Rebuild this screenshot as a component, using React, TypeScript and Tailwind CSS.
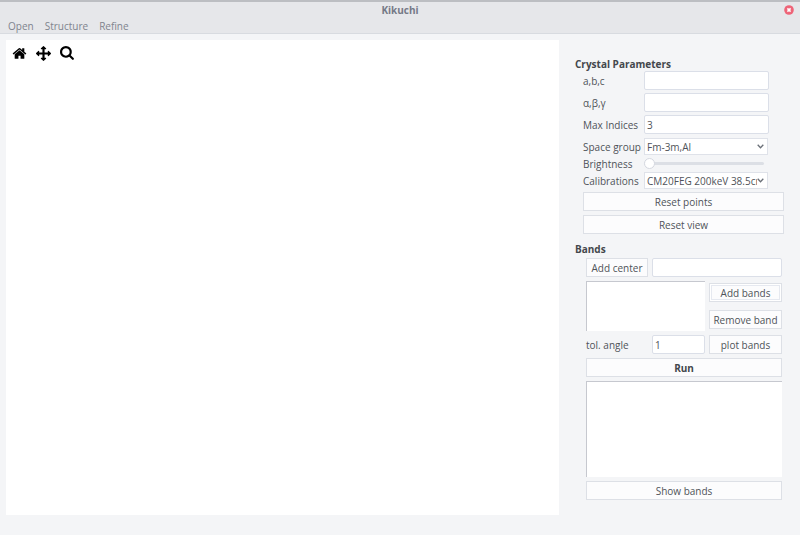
import type { ComponentProps } from 'react'
import { clsx } from 'clsx'

const MENU = ['Open', 'Structure', 'Refine']

const TOOLS = [
  {
    label: 'Home',
    path: 'M1472 992v480q0 26-19 45t-45 19h-384v-384h-256v384h-384q-26 0-45-19t-19-45v-480q0-1 .5-3t.5-3l575-474 575 474q1 2 1 6zm223-69l-62 74q-8 9-21 11h-3q-13 0-21-7l-692-577-692 577q-12 8-24 7-13-2-21-11l-62-74q-8-10-7-23.5t11-21.5l719-599q32-26 76-26t76 26l244 204v-195q0-14 9-23t23-9h192q14 0 23 9t9 23v408l219 182q10 8 11 21.5t-7 23.5z',
  },
  {
    label: 'Pan',
    path: 'M1792 896q0 26-19 45l-256 256q-19 19-45 19t-45-19-19-45v-128h-384v384h128q26 0 45 19t19 45-19 45l-256 256q-19 19-45 19t-45-19l-256-256q-19-19-19-45t19-45 45-19h128v-384h-384v128q0 26-19 45t-45 19-45-19l-256-256q-19-19-19-45t19-45l256-256q19-19 45-19t45 19 19 45v128h384v-384h-128q-26 0-45-19t-19-45 19-45l256-256q19-19 45-19t45 19l256 256q19 19 19 45t-19 45-45 19h-128v384h384v-128q0-26 19-45t45-19 45 19l256 256q19 19 19 45z',
  },
  {
    label: 'Zoom',
    path: 'M1152 704q0-185-131.5-316.5t-316.5-131.5-316.5 131.5-131.5 316.5 131.5 316.5 316.5 131.5 316.5-131.5 131.5-316.5zm512 832q0 52-38 90t-90 38q-54 0-90-38l-343-342q-179 124-399 124-143 0-273.5-55.5t-225-150-150-225-55.5-273.5 55.5-273.5 150-225 225-150 273.5-55.5 273.5 55.5 225 150 150 225 55.5 273.5q0 220-124 399l343 343q37 37 37 90z',
  },
]

export default function App() {
  return (
    <div className="flex min-h-screen flex-col bg-[#f4f5f7] font-['Open_Sans','Noto_Sans',sans-serif] text-[10px] leading-[14px] text-[#4f5359]">
      <Header />
      <div className="flex flex-1 pt-1.5 pb-5 pl-1.5">
        <Plot />
        <aside className="w-[241px] shrink-0 px-4 pt-[17px]">
          <CrystalParameters />
          <Bands />
        </aside>
      </div>
    </div>
  )
}

function Header() {
  return (
    <header className="border-t-2 border-b border-t-[#bcbec2] border-b-[#d8dbe0] bg-[#e6e7ea] text-[#80848e]">
      <div className="flex h-4 items-center px-1.5">
        <span className="w-2.5" />
        <h1 className="flex-1 text-center font-bold text-[#757a87]">Kikuchi</h1>
        <button type="button" aria-label="Close">
          <svg className="size-2.5" viewBox="0 0 10 10">
            <circle cx="5" cy="5" r="4.8" fill="#ee6478" />
            <path d="M3.4 3.4l3.2 3.2M6.6 3.4L3.4 6.6" stroke="#fff" strokeWidth="1.5" />
          </svg>
        </button>
      </div>
      <nav className="flex gap-[11px] px-2 pt-px">
        {MENU.map((item) => (
          <button key={item} type="button">
            {item}
          </button>
        ))}
      </nav>
    </header>
  )
}

function Plot() {
  return (
    <main className="flex-1 bg-white">
      <div className="flex gap-[9px] p-1.5 text-black">
        {TOOLS.map((tool) => (
          <button key={tool.label} type="button" aria-label={tool.label}>
            <svg className="size-[15px]" viewBox="0 0 1792 1792" fill="currentColor">
              <path d={tool.path} />
            </svg>
          </button>
        ))}
      </div>
    </main>
  )
}

function CrystalParameters() {
  return (
    <section>
      <h2 className="font-bold text-[#43474c]">Crystal Parameters</h2>
      <div className="mr-[15px] ml-2 grid grid-cols-[61px_1fr] items-center gap-y-[3px]">
        <label htmlFor="abc">a,b,c</label>
        <TextBox id="abc" />
        <label htmlFor="angles">α,β,γ</label>
        <TextBox id="angles" />
        <label htmlFor="max-indices">Max Indices</label>
        <TextBox id="max-indices" defaultValue="3" />
      </div>
      <div className="mt-1 mr-4 ml-2 grid grid-cols-[61px_1fr] items-center">
        <label htmlFor="space-group">Space group</label>
        <Select id="space-group" option="Fm-3m,Al" />
        <label htmlFor="brightness">Brightness</label>
        <input
          id="brightness"
          type="range"
          defaultValue={0}
          className="mr-1 h-[17px] min-w-0 appearance-none bg-transparent [&::-webkit-slider-runnable-track]:h-[3px] [&::-webkit-slider-runnable-track]:rounded-full [&::-webkit-slider-runnable-track]:bg-[#dcdfe5] [&::-webkit-slider-thumb]:-mt-[4px] [&::-webkit-slider-thumb]:size-[11px] [&::-webkit-slider-thumb]:appearance-none [&::-webkit-slider-thumb]:rounded-full [&::-webkit-slider-thumb]:border [&::-webkit-slider-thumb]:border-[#d5d8e0] [&::-webkit-slider-thumb]:bg-white"
        />
        <label htmlFor="calibrations">Calibrations</label>
        <Select id="calibrations" option="CM20FEG 200keV 38.5cm" />
      </div>
      <div className="mt-[3px] ml-2 flex flex-col gap-1">
        <Button>Reset points</Button>
        <Button>Reset view</Button>
      </div>
    </section>
  )
}

function Bands() {
  return (
    <section className="mt-2">
      <h2 className="font-bold text-[#43474c]">Bands</h2>
      <div className="mt-0.5 mr-0.5 ml-[11px] flex flex-col gap-1">
        <div className="flex gap-1">
          <Button className="w-[62px]">Add center</Button>
          <TextBox aria-label="Center" className="flex-1" />
        </div>
        <div className="flex gap-1">
          <textarea
            aria-label="Band list"
            className="h-[50px] min-w-0 flex-1 resize-none border-t border-l border-[#c6c8cf] bg-white"
          />
          <div className="flex w-[73px] flex-col justify-between py-0.5">
            <Button className="shadow-[inset_0_0_0_1px_#fff,inset_0_0_0_2px_#e6e9f0]">Add bands</Button>
            <Button>Remove band</Button>
          </div>
        </div>
        <div className="flex gap-1">
          <label htmlFor="tolerance" className="flex-1 self-center">
            tol. angle
          </label>
          <TextBox id="tolerance" defaultValue="1" className="w-[53px]" />
          <Button className="w-[73px]">plot bands</Button>
        </div>
        <Button className="font-bold text-[#43474c]">Run</Button>
        <textarea
          aria-label="Results"
          className="h-24 resize-none border-t border-l border-[#c6c8cf] bg-white"
        />
        <Button>Show bands</Button>
      </div>
    </section>
  )
}

// ── Controls ───────────────────────────────────────────────────────────────────

function Button({ className, ...props }: ComponentProps<'button'>) {
  return (
    <button
      type="button"
      className={clsx('h-[19px] border border-[#dde0e6] bg-[#fcfcfd]', className)}
      {...props}
    />
  )
}

function TextBox({ className, ...props }: ComponentProps<'input'>) {
  return (
    <input
      type="text"
      className={clsx(
        'h-[19px] min-w-0 rounded-xs border border-[#dbdfe8] bg-white px-0.5',
        className
      )}
      {...props}
    />
  )
}

function Select({ id, option }: { id: string; option: string }) {
  return (
    <div className="relative min-w-0">
      <select
        id={id}
        className="block h-[17px] w-full appearance-none overflow-hidden border border-[#dfe2e9] bg-white pr-2.5 pl-0.5"
      >
        <option>{option}</option>
      </select>
      <svg
        className="pointer-events-none absolute top-1.5 right-1 h-[5px] w-[7px]"
        viewBox="0 0 7 5"
        fill="none"
        stroke="#6b7078"
        strokeWidth="1.3"
      >
        <path d="M0.7 0.8L3.5 3.8L6.3 0.8" />
      </svg>
    </div>
  )
}
